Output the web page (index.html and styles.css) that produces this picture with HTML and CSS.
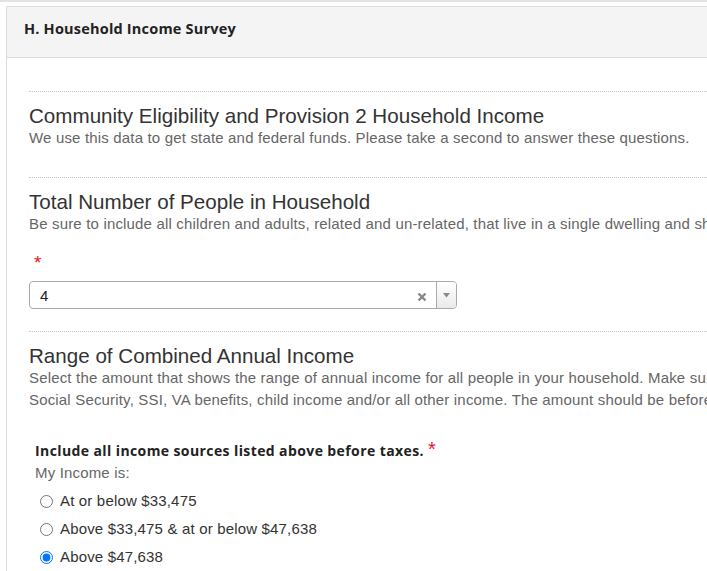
FILE: index.html
```html
<!DOCTYPE html>
<html>
<head>
<meta charset="utf-8">
<link rel="stylesheet" href="styles.css">
</head>
<body>
<div class="topbar"></div>
<div class="panel">
  <div class="panel-head">H. Household Income Survey</div>
  <div class="panel-body">
    <section class="block block-intro">
      <h2>Community Eligibility and Provision 2 Household Income</h2>
      <p class="sub">We use this data to get state and federal funds. Please take a second to answer these questions.</p>
    </section>
    <section class="block block-people">
      <h2>Total Number of People in Household</h2>
      <p class="sub">Be sure to include all children and adults, related and un-related, that live in a single dwelling and share income and expenses.</p>
      <div class="field">
        <div class="field-label"><span class="req">*</span></div>
        <div class="select">
          <span class="select-value">4</span>
          <span class="select-clear">
            <svg width="10" height="10" viewBox="0 0 10 10"><path d="M1.5 1.5 L8.5 8.5 M8.5 1.5 L1.5 8.5" stroke="#888" stroke-width="2.4" stroke-linecap="butt"/></svg>
          </span>
          <span class="select-arrow">
            <svg width="7" height="5" viewBox="0 0 7 5"><path d="M0 0 H7 L3.5 4.5 Z" fill="#888"/></svg>
          </span>
        </div>
      </div>
    </section>
    <section class="block block-range">
      <h2>Range of Combined Annual Income</h2>
      <p class="sub">Select the amount that shows the range of annual income for all people in your household. Make sure to include wages, salaries, tips, child support, alimony, pensions,<br>Social Security, SSI, VA benefits, child income and/or all other income. The amount should be before taxes.</p>
      <div class="question">
        <div class="q-label">Include all income sources listed above before taxes. <span class="req">*</span></div>
        <div class="q-help">My Income is:</div>
        <div class="options">
          <label class="option"><input type="radio" name="income"><span>At or below $33,475</span></label>
          <label class="option"><input type="radio" name="income"><span>Above $33,475 &amp; at or below $47,638</span></label>
          <label class="option"><input type="radio" name="income" checked><span>Above $47,638</span></label>
        </div>
      </div>
    </section>
  </div>
</div>
</body>
</html>
```

FILE: styles.css
```css
html, body {
  margin: 0;
  padding: 0;
  overflow: hidden;
  background: #fff;
}
body {
  font-family: "Liberation Sans", Arial, sans-serif;
  font-size: 15px;
  letter-spacing: 0.17px;
  color: #333;
}
.topbar {
  height: 2px;
  background: #e2e2e2;
  width: 1200px;
}
.panel {
  margin: 4px 0 0 6px;
  width: 1400px;
  border: 1px solid #ddd;
  border-right: none;
}
.panel-head {
  height: 42px;
  padding: 0 0 8px 17px;
  display: flex;
  align-items: center;
  background: #f4f4f4;
  border-bottom: 1px solid #ddd;
  font-family: "Open Sans", sans-serif;
  font-weight: 700;
  font-size: 14.5px;
  letter-spacing: 0.2px;
  color: #222;
}
.panel-body {
  padding: 33px 0 40px 22px;
}
.block {
  border-top: 1px dotted #c4c4c4;
  padding-top: 13px;
}
.block h2 {
  margin: 0;
  font-size: 20.6px;
  letter-spacing: 0;
  line-height: 22px;
  font-weight: 400;
  color: #333;
}
.sub {
  margin: 0;
  line-height: 22px;
  color: #666;
}
.block-intro {
  padding-bottom: 28px;
}
.block-people {
  padding-bottom: 22px;
}
.field {
  margin-top: 18px;
}
.field-label {
  padding-left: 5px;
  height: 20px;
  line-height: 20px;
}
.req {
  color: #e8141c;
  font-size: 19px;
}
.select {
  margin-top: 8px;
  width: 426px;
  height: 26px;
  border: 1px solid #aaa;
  border-radius: 4px;
  display: flex;
  align-items: center;
  overflow: hidden;
}
.select-value {
  flex: 1;
  padding-left: 10px;
  color: #222;
}
.select-clear {
  display: flex;
  width: 10px;
  height: 10px;
  margin-right: 9px;
  margin-top: 3px;
}
.select-arrow {
  width: 19px;
  height: 26px;
  border-left: 1px solid #aaa;
  background: linear-gradient(#fff, #eaeaea);
  display: flex;
  align-items: center;
  justify-content: center;
}
.question {
  margin-top: 28px;
  padding-left: 6px;
}
.q-label {
  font-family: "Open Sans", sans-serif;
  font-weight: 700;
  font-size: 14px;
  letter-spacing: 0.4px;
  line-height: 20px;
  color: #222;
}
.q-label .req {
  font-family: "Liberation Sans", Arial, sans-serif;
  font-weight: 400;
  font-size: 20px;
}
.q-help {
  margin-top: 1px;
  line-height: 22px;
  color: #666;
}
.options {
  margin-top: 3px;
  display: flex;
  flex-direction: column;
}
.option {
  height: 28px;
  display: flex;
  align-items: center;
  color: #333;
}
.option input {
  margin: 0 7px 0 5px;
  width: 13px;
  height: 13px;
}
.option span {
  line-height: 20px;
}
```
